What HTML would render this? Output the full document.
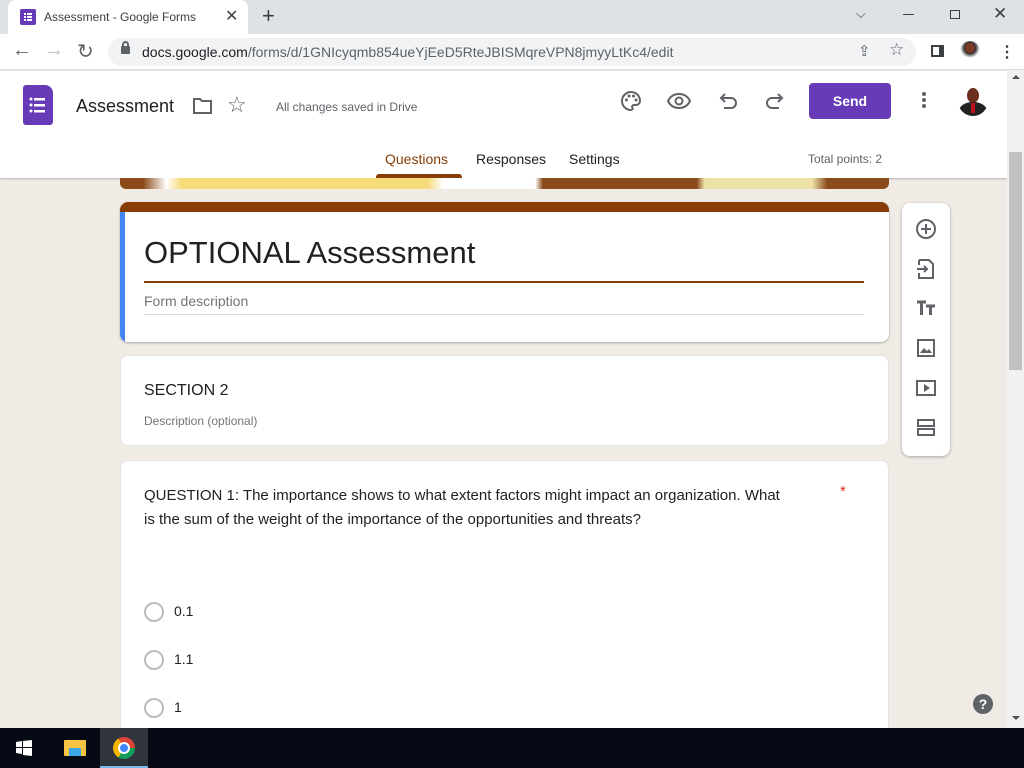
<!DOCTYPE html>
<html><head><meta charset="utf-8"><style>
*{margin:0;padding:0;box-sizing:border-box}
body{width:1024px;height:768px;overflow:hidden;position:relative;background:#f1ebe6;font-family:"Liberation Sans",Arial,sans-serif;color:#202124}
.abs{position:absolute}
svg{display:block}
</style></head><body>
<div class="abs" style="left:0;top:0;width:1024px;height:34px;background:#dee1e6"></div>
<div class="abs" style="left:8px;top:0;width:240px;height:34px;background:#fff;border-radius:8px 8px 0 0"></div>
<div class="abs" style="left:20px;top:9px;width:16px;height:16px;background:#673ab7;border-radius:2px"></div>
<svg class="abs" style="left:20px;top:9px" width="16" height="16"><g fill="#fff"><rect x="4" y="4" width="2" height="2"/><rect x="7" y="4" width="5" height="2"/><rect x="4" y="7" width="2" height="2"/><rect x="7" y="7" width="5" height="2"/><rect x="4" y="10" width="2" height="2"/><rect x="7" y="10" width="5" height="2"/></g></svg>
<div class="abs" style="left:44px;top:10px;font-size:12px;color:#3c4043">Assessment - Google Forms</div>
<div class="abs" style="left:225px;top:6px;font-size:16px;color:#3c4043">✕</div>
<div class="abs" style="left:262px;top:3px;font-size:22px;color:#3c4043">+</div>
<div class="abs" style="left:856px;top:6px;font-size:13px;color:#3c4043">⌵</div>
<div class="abs" style="left:903px;top:14px;width:11px;height:1px;background:#3c4043"></div>
<div class="abs" style="left:950px;top:10px;width:10px;height:9px;border:1px solid #3c4043"></div>
<div class="abs" style="left:993px;top:4px;font-size:17px;color:#3c4043">✕</div>
<div class="abs" style="left:0;top:34px;width:1024px;height:36px;background:#fff;border-bottom:1px solid #dadce0"></div>
<div class="abs" style="left:12px;top:39px;font-size:20px;color:#5f6368">←</div>
<div class="abs" style="left:44px;top:39px;font-size:20px;color:#bdc1c6">→</div>
<div class="abs" style="left:77px;top:39px;font-size:20px;color:#5f6368">↻</div>
<div class="abs" style="left:108px;top:38px;width:808px;height:28px;background:#f1f3f4;border-radius:14px"></div>
<div class="abs" style="left:121px;top:46px;width:9px;height:8px;background:#5f6368;border-radius:1px"></div>
<div class="abs" style="left:122px;top:41px;width:7px;height:7px;border:2px solid #5f6368;border-bottom:none;border-radius:4px 4px 0 0"></div>
<div class="abs" style="left:142px;top:44px;font-size:14px;color:#202124">docs.google.com<span style="color:#5f6368">/forms/d/1GNIcyqmb854ueYjEeD5RteJBISMqreVPN8jmyyLtKc4/edit</span></div>
<div class="abs" style="left:858px;top:42px;font-size:15px;color:#5f6368">⇪</div>
<div class="abs" style="left:889px;top:40px;font-size:17px;color:#5f6368">☆</div>
<div class="abs" style="left:931px;top:45px;width:13px;height:12px;border:2px solid #3c4043;border-right-width:5px"></div>
<div class="abs" style="left:960px;top:41px;width:20px;height:20px;border-radius:50%;background:radial-gradient(circle at 50% 35%,#7a3b25 30%,#222 32%,#fff 60%)"></div>
<div class="abs" style="left:999px;top:42px;font-size:16px;color:#3c4043;font-weight:bold">⋮</div>
<div class="abs" style="left:0;top:71px;width:1007px;height:107px;background:#fff;box-shadow:0 1px 2px rgba(0,0,0,.25)"></div>
<div class="abs" style="left:23px;top:85px;width:30px;height:40px;background:#673ab7;border-radius:3px 8px 3px 3px"></div>
<svg class="abs" style="left:23px;top:85px" width="30" height="40"><g fill="#fff"><circle cx="8" cy="14" r="1.5"/><circle cx="8" cy="20" r="1.5"/><circle cx="8" cy="26" r="1.5"/><rect x="11" y="13" width="11" height="2.5"/><rect x="11" y="19" width="11" height="2.5"/><rect x="11" y="25" width="11" height="2.5"/></g></svg>
<div class="abs" style="left:76px;top:96px;font-size:18px;color:#202124">Assessment</div>
<svg class="abs" style="left:192px;top:97px" width="22" height="18"><path d="M2 2h6l2 2h9v12H2z" fill="none" stroke="#5f6368" stroke-width="2"/></svg>
<div class="abs" style="left:227px;top:92px;font-size:22px;color:#5f6368">☆</div>
<div class="abs" style="left:276px;top:100px;font-size:12px;color:#5f6368">All changes saved in Drive</div>
<svg class="abs" style="left:619px;top:89px" width="24" height="24"><path d="M12 3a9 9 0 0 0 0 18c1.5 0 2-1 1.5-2-1-1.5 0-3 1.5-3H17a4 4 0 0 0 4-4c0-5-4-9-9-9z" fill="none" stroke="#5f6368" stroke-width="2"/><circle cx="7.5" cy="11" r="1.5" fill="#5f6368"/><circle cx="10" cy="7" r="1.5" fill="#5f6368"/><circle cx="14.5" cy="7" r="1.5" fill="#5f6368"/><circle cx="17" cy="11" r="1.5" fill="#5f6368"/></svg>
<svg class="abs" style="left:667px;top:89px" width="24" height="24"><path d="M1 12c3-6 8-7 11-7s8 1 11 7c-3 6-8 7-11 7S4 18 1 12z" fill="none" stroke="#5f6368" stroke-width="2"/><circle cx="12" cy="12" r="3.5" fill="none" stroke="#5f6368" stroke-width="2"/></svg>
<svg class="abs" style="left:717px;top:90px" width="22" height="22"><path d="M4 8h10a5 5 0 0 1 0 10H7M8 4L4 8l4 4" fill="none" stroke="#5f6368" stroke-width="2"/></svg>
<svg class="abs" style="left:764px;top:90px" width="22" height="22"><path d="M18 8H8a5 5 0 0 0 0 10h7M14 4l4 4-4 4" fill="none" stroke="#5f6368" stroke-width="2"/></svg>
<div class="abs" style="left:809px;top:83px;width:82px;height:36px;background:#673ab7;border-radius:4px;color:#fff;font-size:14px;font-weight:bold;text-align:center;line-height:36px">Send</div>
<div class="abs" style="left:922px;top:92px;width:4px;height:4px;border-radius:2px;background:#5f6368;box-shadow:0 6px 0 #5f6368,0 12px 0 #5f6368"></div>
<div class="abs" style="left:958px;top:86px;width:30px;height:30px;border-radius:50%;overflow:hidden;background:#fff"><div style="position:absolute;left:9px;top:2px;width:12px;height:15px;border-radius:50%;background:#6b2d1c"></div><div style="position:absolute;left:1px;top:16px;width:28px;height:18px;border-radius:50% 50% 0 0;background:#222"></div><div style="position:absolute;left:13px;top:17px;width:4px;height:10px;background:#c0101a"></div></div>
<div class="abs" style="left:385px;top:151px;font-size:14px;color:#873d05">Questions</div>
<div class="abs" style="left:376px;top:174px;width:86px;height:4px;background:#873d05;border-radius:3px 3px 0 0"></div>
<div class="abs" style="left:476px;top:151px;font-size:14px;color:#202124">Responses</div>
<div class="abs" style="left:569px;top:151px;font-size:14px;color:#202124">Settings</div>
<div class="abs" style="left:808px;top:152px;font-size:12px;color:#5f6368">Total points: 2</div>
<div class="abs" style="left:120px;top:178px;width:769px;height:11px;border-radius:0 0 6px 6px;background:linear-gradient(90deg,#8b4a17 0,#8b4a17 3%,#fff 6%,#f5db7a 8%,#f5db7a 40%,#fff 42%,#fff 54%,#8a4a1c 55%,#8a4a1c 75%,#ede1a8 76%,#ede1a8 90%,#8a4a1c 92%)"></div>
<div class="abs" style="left:120px;top:202px;width:769px;height:140px;background:#fff;border-radius:8px;box-shadow:0 1px 2px rgba(0,0,0,.3);overflow:hidden">
 <div style="position:absolute;left:0;top:0;width:100%;height:10px;background:#873d05"></div>
 <div style="position:absolute;left:0;top:10px;width:5px;height:130px;background:#4285f4"></div>
</div>
<div class="abs" style="left:144px;top:235px;font-size:31px;color:#202124">OPTIONAL Assessment</div>
<div class="abs" style="left:144px;top:281px;width:720px;height:2px;background:#873d05"></div>
<div class="abs" style="left:144px;top:293px;font-size:14px;color:#70757a">Form description</div>
<div class="abs" style="left:144px;top:314px;width:720px;height:1px;background:#dadce0"></div>
<div class="abs" style="left:120px;top:355px;width:769px;height:91px;background:#fff;border-radius:8px;border:1px solid #e3e3e3"></div>
<div class="abs" style="left:144px;top:382px;font-size:16px;color:#202124">SECTION 2</div>
<div class="abs" style="left:144px;top:414px;font-size:12px;color:#70757a">Description (optional)</div>
<div class="abs" style="left:120px;top:460px;width:769px;height:290px;background:#fff;border-radius:8px;border:1px solid #e3e3e3"></div>
<div class="abs" style="left:144px;top:484px;width:720px;font-size:15px;line-height:24px;color:#202124;white-space:nowrap">QUESTION 1: The importance shows to what extent factors might impact an organization. What<br>is the sum of the weight of the importance of the opportunities and threats?</div>
<div class="abs" style="left:840px;top:483px;font-size:15px;color:#d93025">*</div>
<div class="abs" style="left:144px;top:602px;width:20px;height:20px;border:2px solid #bdbdbd;border-radius:50%"></div>
<div class="abs" style="left:174px;top:603px;font-size:14px">0.1</div>
<div class="abs" style="left:144px;top:650px;width:20px;height:20px;border:2px solid #bdbdbd;border-radius:50%"></div>
<div class="abs" style="left:174px;top:651px;font-size:14px">1.1</div>
<div class="abs" style="left:144px;top:698px;width:20px;height:20px;border:2px solid #bdbdbd;border-radius:50%"></div>
<div class="abs" style="left:174px;top:699px;font-size:14px">1</div>
<div class="abs" style="left:902px;top:203px;width:48px;height:253px;background:#fff;border-radius:8px;box-shadow:0 1px 3px rgba(0,0,0,.3)"></div>
<svg class="abs" style="left:914px;top:216px" width="24" height="230" fill="none" stroke="#5f6368" stroke-width="2">
<circle cx="12" cy="13" r="9"/><path d="M12 8v10M7 13h10"/>
<path d="M5 44h10l4 4v14H5v-5M5 49v-5M3 53h10M10 50l3 3-3 3"/>
<path d="M3 86h9M7.5 86v13M12 90h9M16.5 90v9" stroke-width="3"/>
<rect x="4" y="124" width="16" height="16"/><path d="M6 137l4-5 3 3 2-2 3 4z" fill="#5f6368" stroke="none"/>
<rect x="3" y="165" width="18" height="14"/><path d="M10 168v8l6-4z" fill="#5f6368" stroke="none"/>
<rect x="4" y="204" width="16" height="6"/><rect x="4" y="213" width="16" height="6"/>
</svg>
<div class="abs" style="left:1007px;top:70px;width:17px;height:658px;background:#f1f1f1"></div>
<div class="abs" style="left:1009px;top:152px;width:13px;height:218px;background:#c1c1c1"></div>
<div class="abs" style="left:1012px;top:75px;width:0;height:0;border:4px solid transparent;border-bottom-color:#505050;border-top:none"></div>
<div class="abs" style="left:1012px;top:716px;width:0;height:0;border:4px solid transparent;border-top-color:#505050;border-bottom:none"></div>
<div class="abs" style="left:973px;top:694px;width:20px;height:20px;border-radius:50%;background:#5f6368;color:#fff;font-size:14px;font-weight:bold;text-align:center;line-height:20px">?</div>
<div class="abs" style="left:0;top:728px;width:1024px;height:40px;background:#050a14"></div>
<svg class="abs" style="left:16px;top:740px" width="16" height="16" fill="#fff"><path d="M0 2l6-1v6H0zM7 1l9-1v7H7zM0 8h6v6l-6-1zM7 8h9v8l-9-1z"/></svg>
<div class="abs" style="left:64px;top:740px;width:22px;height:16px;background:#f6c343;border-radius:1px"></div>
<div class="abs" style="left:69px;top:748px;width:12px;height:8px;background:#3ba6e8"></div>
<div class="abs" style="left:100px;top:728px;width:48px;height:40px;background:#30353d;border-bottom:2px solid #76b9ed"></div>
<div class="abs" style="left:113px;top:737px;width:22px;height:22px;border-radius:50%;background:conic-gradient(from -30deg,#db4437 0 120deg,#0f9d58 120deg 240deg,#f4b400 240deg 360deg)"></div>
<div class="abs" style="left:118px;top:742px;width:12px;height:12px;border-radius:50%;background:#4285f4;border:2px solid #fff"></div>
</body></html>
